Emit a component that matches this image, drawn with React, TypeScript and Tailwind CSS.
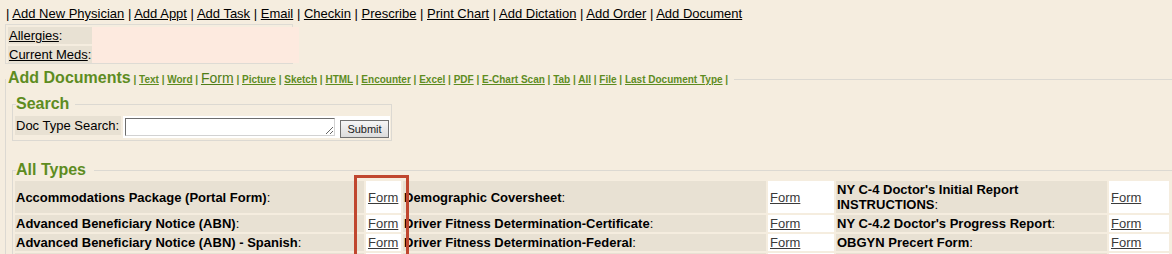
import React from "react";

const topLinks = [
  "Add New Physician",
  "Add Appt",
  "Add Task",
  "Email",
  "Checkin",
  "Prescribe",
  "Print Chart",
  "Add Dictation",
  "Add Order",
  "Add Document",
];

const docLinksA = ["Text", "Word"];
const docLinksB = [
  "Picture",
  "Sketch",
  "HTML",
  "Encounter",
  "Excel",
  "PDF",
  "E-Chart Scan",
  "Tab",
  "All",
  "File",
  "Last Document Type",
];

const rows: string[][] = [
  ["Accommodations Package (Portal Form)", "Demographic Coversheet", "NY C-4 Doctor's Initial Report INSTRUCTIONS"],
  ["Advanced Beneficiary Notice (ABN)", "Driver Fitness Determination-Certificate", "NY C-4.2 Doctor's Progress Report"],
  ["Advanced Beneficiary Notice (ABN) - Spanish", "Driver Fitness Determination-Federal", "OBGYN Precert Form"],
];

function Label({ text }: { text: string }) {
  return (
    <div className="bg-[#e8e1d3] pl-[1px] py-[1px] flex items-center leading-[15px] text-[13px] text-black">
      <span>
        <b>{text}</b>:
      </span>
    </div>
  );
}

function FormCell() {
  return (
    <div className="bg-white pl-[2px] py-[1px] flex items-center leading-[15px] text-[13px]">
      <a className="underline text-[#3a3a3a] cursor-pointer">Form</a>
    </div>
  );
}

export default function App() {
  const green = "text-[#5e8c1f]";
  return (
    <div
      className="relative w-[1172px] h-[254px] overflow-hidden bg-[#f5eddf] text-black"
      style={{ fontFamily: '"Liberation Sans", Arial, sans-serif' }}
    >
      {/* top link bar */}
      <div className="pt-[6px] pl-[6px] text-[13px] leading-[15px] whitespace-nowrap">
        {topLinks.map((l) => (
          <React.Fragment key={l}>
            {"| "}
            <a className="underline cursor-pointer">{l}</a>{" "}
          </React.Fragment>
        ))}
      </div>

      {/* allergies box */}
      <div className="mt-[3px] ml-[5px] w-[288px] border border-[#dedbd4] pt-[2px] pl-[2px] flex text-[13px] leading-[15px] whitespace-nowrap">
        <div className="flex flex-col gap-[2px] w-[84px] shrink-0">
          <div className="bg-[#e8e1d3] h-[17px] pl-[1px] flex items-center">
            <span>
              <a className="underline">Allergies</a>:
            </span>
          </div>
          <div className="bg-[#e8e1d3] h-[17px] pl-[1px] flex items-center">
            <span>
              <a className="underline">Current Meds</a>:
            </span>
          </div>
        </div>
        <div className="w-[207px] shrink-0 h-[36px] bg-[#fdeadf]" />
      </div>

      {/* Add Documents fieldset */}
      <fieldset className="mt-[5px] ml-[5px] w-[1200px] border border-[#dcd9d2] p-0 m-0">
        <legend className={`pl-[2px] pr-[6px] leading-[18px] font-bold ${green} whitespace-nowrap`}>
          <span className="text-[16px]">Add Documents</span>
          <span className="text-[10px]">
            {" | "}
            {docLinksA.map((l) => (
              <React.Fragment key={l}>
                <a className="underline cursor-pointer">{l}</a>
                {" | "}
              </React.Fragment>
            ))}
          </span>
          <a className="underline text-[14px] font-normal text-[#4f7d17] cursor-pointer">Form</a>
          <span className="text-[10px]">
            {" | "}
            {docLinksB.map((l) => (
              <React.Fragment key={l}>
                <a className="underline cursor-pointer">{l}</a>
                {" | "}
              </React.Fragment>
            ))}
          </span>
        </legend>

        {/* Search fieldset */}
        <fieldset className="mt-[6px] ml-[6px] w-[380px] border border-[#dcd9d2] p-0 pb-[2px]">
          <legend className={`ml-[3px] pr-[6px] leading-[18px] text-[16px] font-bold ${green}`}>Search</legend>
          <div className="ml-[2px] flex items-start text-[13px]">
            <div className="mt-[3px] h-[19px] w-[106px] bg-[#e8e1d3] pl-[1px] flex items-center whitespace-nowrap">
              Doc Type Search:
            </div>
            <div className="mt-[3px] ml-[2px] h-[22px] w-[267px] bg-white flex items-start">
              <textarea
                className="mt-[2px] ml-[2px] h-[18px] w-[210px] resize-y bg-white border border-t-[#6e6e6e] border-l-[#6e6e6e] border-r-[#d2d2d2] border-b-[#d2d2d2] outline-none p-0 text-[13px] leading-[15px]"
                rows={1}
              />
              <button className="mt-[4px] ml-[5px] h-[18px] w-[49px] border border-[#707070] bg-gradient-to-b from-[#f6f6f6] to-[#dcdcdc] text-[11px] leading-[14px] text-[#222] flex items-center justify-center">
                Submit
              </button>
            </div>
          </div>
        </fieldset>

        {/* All Types fieldset */}
        <fieldset className="mt-[20px] ml-[6px] w-[1200px] border border-[#dcd9d2] p-0">
          <legend className={`ml-[3px] pr-[8px] leading-[18px] text-[16px] font-bold ${green}`}>All Types</legend>
          <div className="ml-[2px] mt-[2px] grid grid-cols-[349px_35px_363px_66px_271px_60px] gap-[2px]">
            {rows.map((r, i) => (
              <React.Fragment key={i}>
                <Label text={r[0]} />
                <FormCell />
                <Label text={r[1]} />
                <FormCell />
                <Label text={r[2]} />
                <FormCell />
              </React.Fragment>
            ))}
            <div className="h-[17px] bg-[#e8e1d3]" />
            <div className="h-[17px] bg-white" />
            <div className="h-[17px] bg-[#e8e1d3]" />
            <div className="h-[17px] bg-white" />
            <div className="h-[17px] bg-[#e8e1d3]" />
            <div className="h-[17px] bg-white" />
          </div>
        </fieldset>
      </fieldset>

      {/* red annotation box */}
      <div className="absolute left-[354px] top-[175px] w-[55px] h-[100px] border-[3px] border-[#c0472f]" />
    </div>
  );
}
